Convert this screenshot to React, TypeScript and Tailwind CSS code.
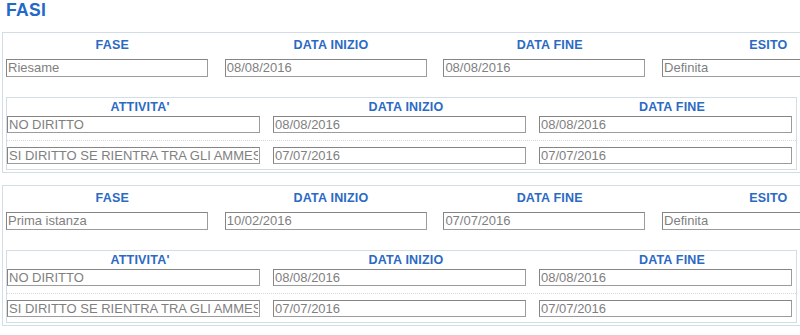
import React from "react";

type Attivita = { nome: string; inizio: string; fine: string };
type Fase = { fase: string; inizio: string; fine: string; esito: string; attivita: Attivita[] };

const attivita: Attivita[] = [
  { nome: "NO DIRITTO", inizio: "08/08/2016", fine: "08/08/2016" },
  { nome: "SI DIRITTO SE RIENTRA TRA GLI AMMESSI", inizio: "07/07/2016", fine: "07/07/2016" },
];

const fasi: Fase[] = [
  { fase: "Riesame", inizio: "08/08/2016", fine: "08/08/2016", esito: "Definita", attivita },
  { fase: "Prima istanza", inizio: "10/02/2016", fine: "07/07/2016", esito: "Definita", attivita },
];

const Field = ({ value, wide }: { value: string; wide?: boolean }) => (
  <input
    readOnly
    value={value}
    className={
      (wide ? "w-[253px] h-[17px] " : "w-[202px] h-[18px] ") +
      "block border border-[#9c9c9c] border-t-[#858585] border-l-[#858585] bg-white px-[1px] text-[13px] text-[#7f7f7f] outline-none font-['Liberation_Sans',Arial,sans-serif]"
    }
  />
);

const Head = ({ children }: { children: React.ReactNode }) => (
  <div className="text-center text-[12.5px] leading-[16px] font-bold text-[#2b6ac4] tracking-[0.2px]">
    {children}
  </div>
);

const FaseBox = ({ f }: { f: Fase }) => (
  <div className="ml-[2px] mb-[12px] w-[880px] border border-[#d3dde4] pb-[2px]">
    <div className="grid grid-cols-[repeat(4,218.7px)] pt-[4px]">
      <Head>FASE</Head>
      <Head>DATA INIZIO</Head>
      <Head>DATA FINE</Head>
      <Head>ESITO</Head>
    </div>
    <div className="grid grid-cols-[repeat(4,218.7px)] mt-[6px]">
      {[f.fase, f.inizio, f.fine, f.esito].map((v, i) => (
        <div key={i} className="pl-[3px]">
          <Field value={v} />
        </div>
      ))}
    </div>

    {/* attivita */}
    <div className="ml-[3px] mt-[20px] w-[791px] border border-[#d3dde4]">
      <div className="grid grid-cols-[repeat(3,266px)] pt-[1px]">
        <Head>ATTIVITA'</Head>
        <Head>DATA INIZIO</Head>
        <Head>DATA FINE</Head>
      </div>
      {f.attivita.map((a, i) => (
        <div
          key={i}
          className={
            i === 0
              ? "grid grid-cols-[repeat(3,266px)] pt-[1px] pb-[7px] border-b border-dotted border-[#d6d6d6]"
              : "grid grid-cols-[repeat(3,266px)] pt-[6px] pb-[5px]"
          }
        >
          <Field value={a.nome} wide />
          <Field value={a.inizio} wide />
          <Field value={a.fine} wide />
        </div>
      ))}
    </div>
  </div>
);

export default function App() {
  return (
    <div className="w-[800px] h-[335px] overflow-hidden bg-white font-['Liberation_Sans',Arial,sans-serif]">
      <h2 className="h-[32px] pl-[6px] text-[17.5px] leading-[20px] font-bold text-[#2269c9] tracking-[0.3px]">
        FASI
      </h2>
      {fasi.map((f, i) => (
        <FaseBox key={i} f={f} />
      ))}
    </div>
  );
}
